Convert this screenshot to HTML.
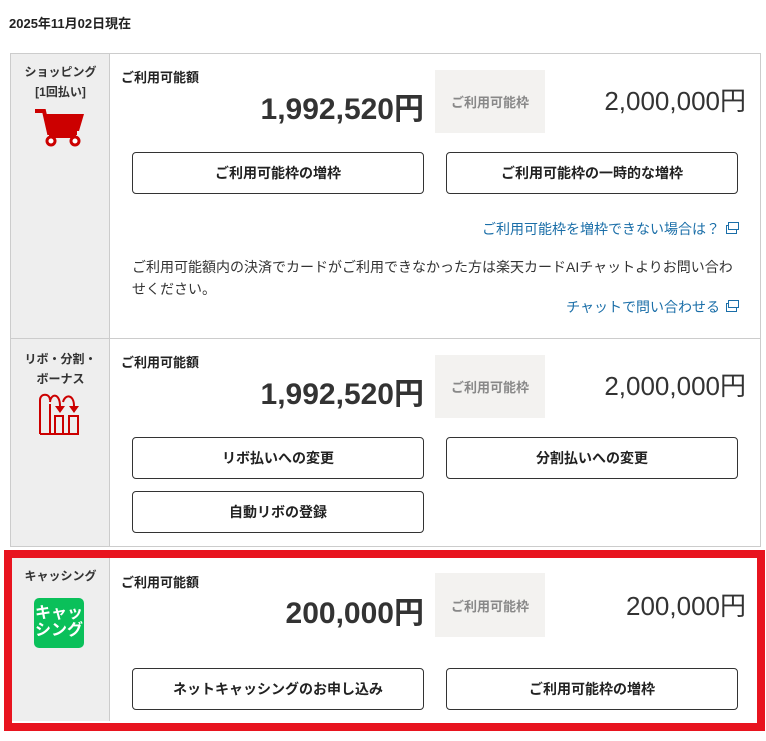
<!DOCTYPE html>
<html><head><meta charset="utf-8"><style>
*{margin:0;padding:0;box-sizing:border-box}
body{width:766px;height:741px;background:#fff;font-family:"Liberation Sans","Noto Sans CJK JP",sans-serif;color:#333;position:relative;overflow:hidden}
.a{position:absolute}
.date{left:9px;top:13px;font-size:13px;font-weight:bold;color:#222}
.left{background:#eee;border-right:1px solid #ccc}
.lt{font-size:12px;font-weight:bold;text-align:center;width:99px;line-height:20px;color:#333}
.lab{font-size:13px;font-weight:bold;color:#222}
.amt{font-size:30px;font-weight:bold;color:#333;text-align:right;width:300px}
.gbox{background:#f3f2f0;color:#888;font-size:13px;font-weight:bold;width:110px;display:flex;align-items:center;justify-content:center}
.lim{font-size:26px;text-align:right;width:300px;color:#333}
.btn{border:1px solid #333;border-radius:4px;width:292px;height:42px;font-size:14px;font-weight:bold;display:flex;align-items:center;justify-content:center;color:#222;background:#fff}
.lnk{color:#1a6ea8;font-size:14px;text-align:right}
.ext{display:inline-block;width:11px;height:9px;border:1.5px solid #1a6ea8;margin-left:6px;position:relative;top:0px}
.ext:before{content:"";position:absolute;left:1px;top:-4px;width:9px;height:6px;border:1.5px solid #1a6ea8;background:#fff}
</style></head><body>
<div class="a date">2025年11月02日現在</div>

<div class="a" style="left:10px;top:53px;width:751px;height:494px;border:1px solid #ccc"></div>
<div class="a left" style="left:11px;top:54px;width:99px;height:492px"></div>
<div class="a" style="left:11px;top:338px;width:749px;height:1px;background:#ccc"></div>

<!-- row1 -->
<div class="a lt" style="left:11px;top:62px">ショッピング<br>[1回払い]</div>
<svg class="a" style="left:34px;top:108px" width="52" height="40" viewBox="0 0 52 40"><path d="M1 3h9l5 22h28" fill="none" stroke="#c00" stroke-width="4"/><path d="M10 6h40l-5 17H14z" fill="#c00"/><path d="M15 28h27" stroke="#c00" stroke-width="4"/><circle cx="17" cy="33" r="4" fill="#fff" stroke="#c00" stroke-width="3"/><circle cx="41" cy="33" r="4" fill="#fff" stroke="#c00" stroke-width="3"/></svg>
<div class="a lab" style="left:121px;top:67px">ご利用可能額</div>
<div class="a amt" style="left:124px;top:84px">1,992,520円</div>
<div class="a gbox" style="left:435px;top:70px;height:63px">ご利用可能枠</div>
<div class="a lim" style="left:446px;top:81px">2,000,000円</div>
<div class="a btn" style="left:132px;top:152px">ご利用可能枠の増枠</div>
<div class="a btn" style="left:446px;top:152px">ご利用可能枠の一時的な増枠</div>
<div class="a lnk" style="left:400px;top:219px;width:337px">ご利用可能枠を増枠できない場合は？<span class="ext"></span></div>
<div class="a" style="left:132px;top:256px;width:610px;font-size:14px;line-height:22px;color:#333">ご利用可能額内の決済でカードがご利用できなかった方は楽天カードAIチャットよりお問い合わせください。</div>
<div class="a lnk" style="left:400px;top:297px;width:337px">チャットで問い合わせる<span class="ext"></span></div>

<!-- row2 -->
<div class="a lt" style="left:11px;top:349px">リボ・分割・<br>ボーナス</div>
<svg class="a" style="left:38px;top:392px" width="46" height="44" viewBox="0 0 46 44"><g fill="none" stroke="#c00" stroke-width="2"><path d="M2 42V8M12 42V12"/><path d="M2 8C2 1 12 1 12 8"/><path d="M2 42h39"/><rect x="17" y="24" width="8" height="18"/><rect x="31" y="24" width="9" height="18"/><path d="M12 10c1-9 10-9 10 4"/><path d="M25 10c2-8 11-8 11 4"/></g><path d="M17 14h10l-5 7zM31 14h10l-5 7z" fill="#c00"/></svg>
<div class="a lab" style="left:121px;top:352px">ご利用可能額</div>
<div class="a amt" style="left:124px;top:369px">1,992,520円</div>
<div class="a gbox" style="left:435px;top:355px;height:63px">ご利用可能枠</div>
<div class="a lim" style="left:446px;top:366px">2,000,000円</div>
<div class="a btn" style="left:132px;top:437px">リボ払いへの変更</div>
<div class="a btn" style="left:446px;top:437px">分割払いへの変更</div>
<div class="a btn" style="left:132px;top:491px">自動リボの登録</div>

<!-- row3 -->
<div class="a" style="left:4px;top:550px;width:761px;height:181px;border:8px solid #e8141f"></div>
<div class="a left" style="left:12px;top:558px;width:98px;height:163px"></div>
<div class="a lt" style="left:11px;top:566px">キャッシング</div>
<div class="a" style="left:34px;top:598px;width:50px;height:50px;background:#0ac05a;border-radius:5px;color:#fff;font-size:16px;font-weight:bold;line-height:17px;text-align:center;padding-top:7px">キャッ<br>シング</div>
<div class="a lab" style="left:121px;top:572px">ご利用可能額</div>
<div class="a amt" style="left:124px;top:588px">200,000円</div>
<div class="a gbox" style="left:435px;top:573px;height:64px">ご利用可能枠</div>
<div class="a lim" style="left:446px;top:586px">200,000円</div>
<div class="a btn" style="left:132px;top:668px">ネットキャッシングのお申し込み</div>
<div class="a btn" style="left:446px;top:668px">ご利用可能枠の増枠</div>
</body></html>
